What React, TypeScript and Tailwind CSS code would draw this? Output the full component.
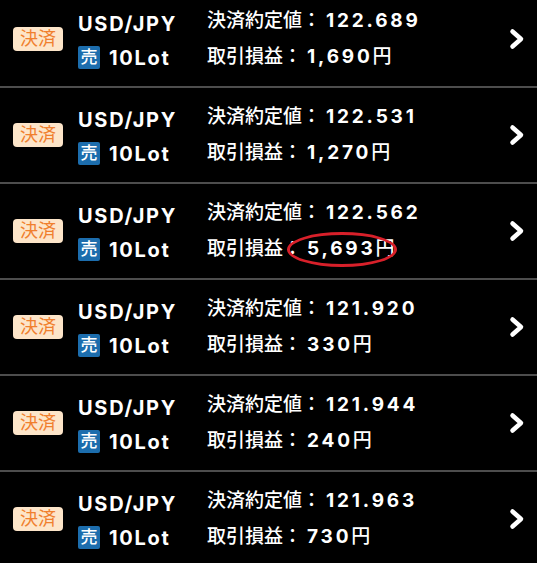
const rows = [
  { rate: '122.689', pl: '1,690' },
  { rate: '122.531', pl: '1,270' },
  { rate: '122.562', pl: '5,693', marked: true },
  { rate: '121.920', pl: '330' },
  { rate: '121.944', pl: '240' },
  { rate: '121.963', pl: '730' },
];

const Chevron = () => (
  <svg width="18" height="22" viewBox="0 0 18 22" fill="none">
    <path d="M4.5 3.5 L13 11 L4.5 18.5" stroke="#ffffff" strokeWidth="4.5" strokeLinejoin="round" strokeLinecap="round" />
  </svg>
);

const Row = ({ rate, pl, marked }: { rate: string; pl: string; marked?: boolean }) => (
  <div className="flex h-[96px] items-center border-b-2 border-[#4d4d4d]">
    <div className="w-[78px] pl-[13px]">
      <span className="inline-flex h-[24px] w-[50px] items-center justify-center rounded-[4px] bg-[#fde5c9] text-[18px] leading-none text-[#f07f2e]">
        決済
      </span>
    </div>
    <div className="mt-[3px] flex w-[129px] flex-col text-[20px] font-bold leading-[34px] tracking-[1.7px]">
      <span>USD/JPY</span>
      <span className="flex items-center">
        <span className="mr-[9px] inline-flex h-[23px] w-[22px] items-center justify-center rounded-[2px] bg-[#1c6dad] text-[17px] font-medium leading-none tracking-normal">
          売
        </span>
        10Lot
      </span>
    </div>
    <div className="flex flex-1 flex-col text-[19px] leading-[36px]">
      <span>
        <span className="font-medium">決済約定値： </span>
        <span className="font-bold tracking-[2.8px]">{rate}</span>
      </span>
      <span className="relative">
        <span className="font-medium">取引損益： </span>
        <span className="font-bold tracking-[2.8px]">{pl}</span>
        <span className="font-medium">円</span>
        {marked && (
          <span className="absolute left-[80px] top-[1px] h-[35px] w-[110px] rounded-[50%] border-[3px] border-[#d8202a]" />
        )}
      </span>
    </div>
    <div className="pr-[11px]">
      <Chevron />
    </div>
  </div>
);

export default function App() {
  return (
    <div className="h-[563px] overflow-hidden bg-black font-['Inter','Noto_Sans_CJK_JP',sans-serif] text-white">
      <div className="-mt-[8px]">
        {rows.map((r, i) => (
          <Row key={i} {...r} />
        ))}
      </div>
    </div>
  );
}
